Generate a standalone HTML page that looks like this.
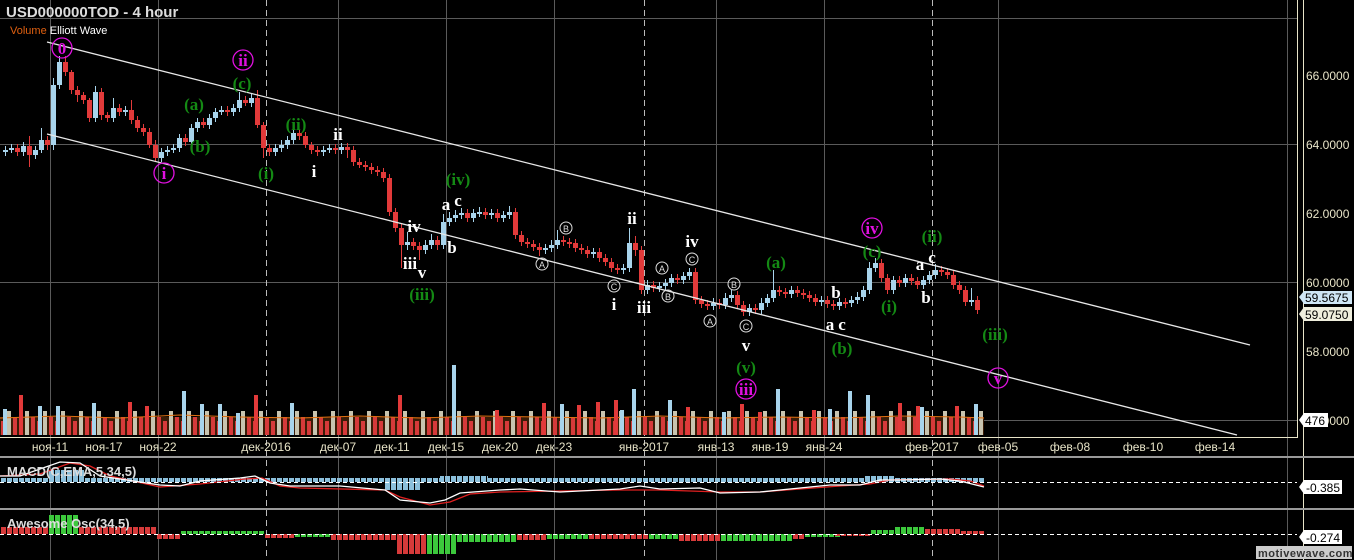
<!DOCTYPE html>
<html><head><meta charset="utf-8"><style>
body{margin:0;background:#000;width:1354px;height:560px;overflow:hidden}
svg{display:block}
.t{font-family:"Liberation Sans",sans-serif}
.w{font-family:"Liberation Serif",serif;font-weight:bold;font-size:17px;text-anchor:middle}
.g{fill:#148a14}.m{fill:#e010e0}.wh{fill:#fff}
.ax{font-family:"Liberation Sans",sans-serif;font-size:12px;fill:#e8e4c8}
</style></head><body>
<svg width="1354" height="560" xmlns="http://www.w3.org/2000/svg">
<defs>
<pattern id="pv" x="0" y="395" width="18" height="40" patternUnits="userSpaceOnUse"><rect x="1" y="26" width="4" height="14" fill="#d63a3a"/><rect x="7" y="16" width="4" height="24" fill="#c8c4b0"/><rect x="13" y="22" width="4" height="18" fill="#d63a3a"/></pattern>
<pattern id="pr" width="6" height="10" patternUnits="userSpaceOnUse"><rect x="1" width="5" height="10" fill="#d63a3a"/></pattern>
<pattern id="pg" width="6" height="10" patternUnits="userSpaceOnUse"><rect x="1" width="5" height="10" fill="#3cc83c"/></pattern>
<pattern id="pb" width="6" height="10" patternUnits="userSpaceOnUse"><rect x="1" width="5" height="10" fill="#8cc0dc"/></pattern>
</defs>
<g stroke="#5a5a5a" stroke-width="1">
<line x1="0" y1="18.5" x2="1297" y2="18.5"/><line x1="0" y1="144.5" x2="1297" y2="144.5"/><line x1="0" y1="282.5" x2="1297" y2="282.5"/><line x1="0" y1="420.5" x2="1297" y2="420.5"/>
<line x1="50.5" y1="0" x2="50.5" y2="560"/><line x1="158.5" y1="0" x2="158.5" y2="560"/><line x1="338.5" y1="0" x2="338.5" y2="560"/><line x1="446.5" y1="0" x2="446.5" y2="560"/><line x1="554.5" y1="0" x2="554.5" y2="560"/><line x1="716.5" y1="0" x2="716.5" y2="560"/><line x1="824.5" y1="0" x2="824.5" y2="560"/><line x1="998.5" y1="0" x2="998.5" y2="560"/><line x1="1287.5" y1="0" x2="1287.5" y2="560"/>
</g>
<g stroke="#bbb" stroke-dasharray="6,4"><line x1="266.5" y1="0" x2="266.5" y2="560"/><line x1="644.5" y1="0" x2="644.5" y2="560"/><line x1="932.5" y1="0" x2="932.5" y2="560"/></g>
<!-- volume -->
<rect x="0" y="417" width="984" height="18" fill="#3a1c06"/>
<rect x="0" y="395" width="984" height="40" fill="url(#pv)"/>
<path d="M0 418L60 416L120 418L180 415L240 417L300 418L360 416L420 418L480 416L540 417L600 418L660 416L720 418L780 417L840 418L900 416L960 417L984 418" fill="none" stroke="#e07010"/>
<path fill="#a8d4ec" d="M3 409h4v26h-4zM38 406h4v29h-4zM56 406h4v29h-4zM92 403h4v32h-4zM182 391h4v44h-4zM200 404h4v31h-4zM218 404h4v31h-4zM236 413h4v22h-4zM290 403h4v32h-4zM452 365h4v70h-4zM560 404h4v31h-4zM620 410h4v25h-4zM632 389h4v46h-4zM668 400h4v35h-4zM722 412h4v23h-4zM776 389h4v46h-4zM828 409h4v26h-4zM848 391h4v44h-4zM866 395h4v40h-4zM920 407h4v28h-4zM974 404h4v31h-4z"/>
<path fill="#e23a3a" d="M19 395h4v40h-4zM128 402h4v33h-4zM145 406h4v29h-4zM254 395h4v40h-4zM398 395h4v40h-4zM495 410h4v25h-4zM542 403h4v32h-4zM577 405h4v30h-4zM596 402h4v33h-4zM614 400h4v35h-4zM686 407h4v28h-4zM740 404h4v31h-4zM758 412h4v23h-4zM812 410h4v25h-4zM898 403h4v32h-4zM916 406h4v29h-4zM955 406h4v29h-4z"/>
<!-- candles -->
<path stroke="#a8d4ec" fill="none" d="M5.5 146V156M11.5 144V153M23.5 142V156M35.5 146V159M41.5 128V153M53.5 78V150M59.5 56V89M95.5 86V122M113.5 98V122M125.5 106V116M161.5 148V162M167.5 146V156M173.5 144V153M179.5 134V152M191.5 124V146M197.5 118V132M209.5 114V129M215.5 108V122M221.5 106V115M233.5 104V116M239.5 92V112M251.5 94V107M275.5 144V156M281.5 140V152M287.5 136V149M293.5 128V144M323.5 146V156M329.5 144V153M341.5 143V154M407.5 232V250M425.5 240V254M431.5 234V249M443.5 214V249M449.5 212V226M455.5 210V222M461.5 208V219M473.5 209V222M479.5 207V217M491.5 209V219M503.5 211V222M509.5 206V219M545.5 244V254M551.5 240V252M557.5 230V249M593.5 248V258M623.5 264V274M629.5 228V272M647.5 280V294M659.5 282V292M665.5 279V290M671.5 274V287M683.5 272V284M689.5 268V280M713.5 298V310M725.5 293V309M731.5 290V302M749.5 304V316M761.5 298V314M767.5 294V307M773.5 270V302M791.5 286V298M821.5 296V306M839.5 298V310M851.5 296V307M857.5 292V304M863.5 286V301M869.5 262V294M875.5 258V272M893.5 276V294M905.5 274V287M923.5 276V289M929.5 271V284M935.5 264V279M971.5 288V306"/>
<path fill="#a8d4ec" d="M3 150h5v2h-5zM9 148h5v2h-5zM21 146h5v6h-5zM33 150h5v5h-5zM39 140h5v10h-5zM51 85h5v60h-5zM57 62h5v23h-5zM93 92h5v26h-5zM111 108h5v10h-5zM123 110h5v2h-5zM159 152h5v6h-5zM165 150h5v2h-5zM171 148h5v2h-5zM177 138h5v10h-5zM189 128h5v14h-5zM195 122h5v6h-5zM207 118h5v7h-5zM213 112h5v6h-5zM219 110h5v2h-5zM231 108h5v4h-5zM237 100h5v8h-5zM249 98h5v5h-5zM273 148h5v4h-5zM279 145h5v3h-5zM285 140h5v5h-5zM291 133h5v7h-5zM321 150h5v2h-5zM327 148h5v2h-5zM339 147h5v3h-5zM405 242h5v3h-5zM423 245h5v5h-5zM429 240h5v5h-5zM441 222h5v23h-5zM447 218h5v4h-5zM453 215h5v3h-5zM459 213h5v2h-5zM471 213h5v5h-5zM477 212h5v2h-5zM489 213h5v2h-5zM501 215h5v3h-5zM507 212h5v3h-5zM543 248h5v2h-5zM549 245h5v3h-5zM555 240h5v5h-5zM591 252h5v2h-5zM621 268h5v2h-5zM627 243h5v25h-5zM645 285h5v5h-5zM657 286h5v2h-5zM663 283h5v3h-5zM669 278h5v5h-5zM681 276h5v4h-5zM687 272h5v4h-5zM711 303h5v3h-5zM723 298h5v7h-5zM729 295h5v3h-5zM747 308h5v4h-5zM759 303h5v7h-5zM765 298h5v5h-5zM771 290h5v8h-5zM789 290h5v4h-5zM819 300h5v2h-5zM837 302h5v4h-5zM849 300h5v3h-5zM855 297h5v3h-5zM861 290h5v7h-5zM867 268h5v22h-5zM873 263h5v5h-5zM891 280h5v10h-5zM903 278h5v5h-5zM921 280h5v5h-5zM927 275h5v5h-5zM933 270h5v5h-5zM969 300h5v2h-5z"/>
<path stroke="#e23a3a" fill="none" d="M17.5 144V156M29.5 136V167M47.5 136V150M65.5 56V76M71.5 70V94M77.5 86V102M83.5 92V104M89.5 98V122M101.5 88V120M107.5 112V122M119.5 104V116M131.5 100V124M137.5 116V132M143.5 124V136M149.5 128V148M155.5 140V162M185.5 134V146M203.5 118V128M227.5 106V116M245.5 96V106M257.5 90V128M263.5 122V158M269.5 144V156M299.5 130V140M305.5 132V148M311.5 142V154M317.5 146V156M335.5 144V154M347.5 143V158M353.5 146V166M359.5 158V168M365.5 161V171M371.5 163V174M377.5 166V176M383.5 168V182M389.5 174V216M395.5 208V232M401.5 224V268M413.5 238V250M419.5 242V260M437.5 236V250M467.5 209V222M485.5 208V219M497.5 209V222M515.5 208V239M521.5 231V246M527.5 238V248M533.5 240V251M539.5 243V256M563.5 236V246M569.5 238V248M575.5 239V252M581.5 244V254M587.5 246V258M599.5 248V262M605.5 254V266M611.5 258V272M617.5 264V274M635.5 236V256M641.5 246V294M653.5 281V292M677.5 274V284M695.5 268V304M701.5 296V308M707.5 300V310M719.5 299V309M737.5 291V309M743.5 301V316M755.5 304V314M779.5 286V296M785.5 288V298M797.5 286V297M803.5 289V299M809.5 291V302M815.5 294V306M827.5 296V308M833.5 300V310M845.5 298V308M881.5 259V282M887.5 274V294M899.5 276V287M911.5 274V285M917.5 277V289M941.5 266V276M947.5 268V279M953.5 271V289M959.5 281V294M965.5 286V306M977.5 296V314"/>
<path fill="#e23a3a" d="M15 148h5v4h-5zM27 146h5v9h-5zM45 140h5v5h-5zM63 62h5v10h-5zM69 72h5v18h-5zM75 90h5v5h-5zM81 95h5v5h-5zM87 100h5v18h-5zM99 92h5v23h-5zM105 115h5v3h-5zM117 108h5v4h-5zM129 110h5v10h-5zM135 120h5v8h-5zM141 128h5v4h-5zM147 132h5v13h-5zM153 145h5v13h-5zM183 138h5v4h-5zM201 122h5v3h-5zM225 110h5v2h-5zM243 100h5v3h-5zM255 98h5v27h-5zM261 125h5v23h-5zM267 148h5v4h-5zM297 133h5v3h-5zM303 136h5v9h-5zM309 145h5v5h-5zM315 150h5v2h-5zM333 148h5v2h-5zM345 147h5v3h-5zM351 150h5v12h-5zM357 162h5v3h-5zM363 165h5v2h-5zM369 167h5v3h-5zM375 170h5v2h-5zM381 172h5v6h-5zM387 178h5v34h-5zM393 212h5v16h-5zM399 228h5v17h-5zM411 242h5v4h-5zM417 246h5v4h-5zM435 240h5v5h-5zM465 213h5v5h-5zM483 212h5v3h-5zM495 213h5v5h-5zM513 212h5v23h-5zM519 235h5v7h-5zM525 242h5v2h-5zM531 244h5v3h-5zM537 247h5v3h-5zM561 240h5v2h-5zM567 242h5v2h-5zM573 243h5v5h-5zM579 248h5v2h-5zM585 250h5v4h-5zM597 252h5v6h-5zM603 258h5v4h-5zM609 262h5v6h-5zM615 268h5v2h-5zM633 243h5v7h-5zM639 250h5v40h-5zM651 285h5v3h-5zM675 278h5v2h-5zM693 272h5v28h-5zM699 300h5v4h-5zM705 304h5v2h-5zM717 303h5v2h-5zM735 295h5v10h-5zM741 305h5v7h-5zM753 308h5v2h-5zM777 290h5v2h-5zM783 292h5v2h-5zM795 290h5v3h-5zM801 293h5v2h-5zM807 295h5v3h-5zM813 298h5v4h-5zM825 300h5v4h-5zM831 304h5v2h-5zM843 302h5v2h-5zM879 263h5v15h-5zM885 278h5v12h-5zM897 280h5v3h-5zM909 278h5v3h-5zM915 281h5v4h-5zM939 270h5v2h-5zM945 272h5v3h-5zM951 275h5v10h-5zM957 285h5v5h-5zM963 290h5v12h-5zM975 300h5v10h-5z"/>
<g stroke="#e8e8e8" stroke-width="1.3"><line x1="47" y1="42" x2="1250" y2="345"/><line x1="47" y1="134" x2="1237" y2="435"/></g>
<!-- MACD -->
<rect x="0" y="478" width="984" height="4" fill="url(#pb)"/>
<rect x="48" y="470" width="36" height="12" fill="url(#pb)"/><rect x="384" y="482" width="36" height="8" fill="url(#pb)"/><rect x="440" y="476" width="48" height="6" fill="url(#pb)"/><rect x="864" y="476" width="30" height="6" fill="url(#pb)"/>
<polyline fill="none" stroke="#e02020" stroke-width="1.3" points="0,476 40,474 70,463 90,466 110,476 160,487 200,484 245,479 262,478 280,486 300,488 385,490 400,497 430,505 450,502 470,494 500,492 560,491 620,490 660,490 720,492 760,492 800,489 840,486 870,484 890,480 950,479 970,481 984,486"/>
<polyline fill="none" stroke="#fff" stroke-width="1.3" points="0,476 20,476 60,462 80,463 100,476 160,485 180,486 200,481 240,478 255,476 270,483 290,486 340,486 385,490 400,500 430,503 445,500 460,493 500,490 520,489 560,492 620,489 640,486 660,489 700,488 720,493 760,492 800,488 830,485 860,485 880,480 900,480 940,479 960,481 984,487"/>
<!-- AO -->
<g>
<rect x="0" y="527" width="48" height="7" fill="url(#pr)"/><rect x="48" y="515" width="30" height="19" fill="url(#pg)"/><rect x="78" y="527" width="78" height="7" fill="url(#pr)"/>
<rect x="156" y="534" width="24" height="5" fill="url(#pr)"/><rect x="180" y="531" width="84" height="3" fill="url(#pg)"/><rect x="264" y="534" width="30" height="4" fill="url(#pr)"/>
<rect x="294" y="534" width="36" height="3" fill="url(#pg)"/><rect x="330" y="534" width="66" height="6" fill="url(#pr)"/><rect x="396" y="534" width="30" height="20" fill="url(#pr)"/>
<rect x="426" y="534" width="30" height="20" fill="url(#pg)"/><rect x="456" y="534" width="60" height="8" fill="url(#pg)"/><rect x="516" y="534" width="30" height="6" fill="url(#pr)"/>
<rect x="546" y="534" width="42" height="5" fill="url(#pg)"/><rect x="588" y="534" width="60" height="5" fill="url(#pr)"/><rect x="648" y="534" width="30" height="5" fill="url(#pg)"/>
<rect x="678" y="534" width="42" height="7" fill="url(#pr)"/><rect x="720" y="534" width="72" height="7" fill="url(#pg)"/><rect x="792" y="534" width="12" height="5" fill="url(#pr)"/>
<rect x="804" y="534" width="36" height="3" fill="url(#pg)"/><rect x="834" y="534" width="36" height="2" fill="url(#pr)"/>
<rect x="870" y="530" width="24" height="4" fill="url(#pg)"/><rect x="894" y="527" width="30" height="7" fill="url(#pg)"/><rect x="924" y="529" width="36" height="5" fill="url(#pr)"/><rect x="960" y="531" width="24" height="3" fill="url(#pr)"/>
</g>
<g stroke="#e8e4c8"><line x1="0" y1="437.5" x2="1297" y2="437.5"/><line x1="1297.5" y1="0" x2="1297.5" y2="438"/><line x1="1303.5" y1="0" x2="1303.5" y2="560"/></g>
<rect x="0" y="456" width="1354" height="2" fill="#999"/><rect x="0" y="508" width="1354" height="2" fill="#999"/>
<g stroke="#fff" stroke-dasharray="4,3"><line x1="0" y1="482.5" x2="1297" y2="482.5"/><line x1="0" y1="534.5" x2="1297" y2="534.5"/></g>
<text x="6" y="17" class="t" font-size="15" font-weight="bold" fill="#ddd">USD000000TOD - 4 hour</text>
<text x="10" y="34" class="t" font-size="11"><tspan fill="#e06010">Volume</tspan><tspan fill="#fff"> Elliott Wave</tspan></text>
<g class="ax"><text x="1306" y="80">66.0000</text><text x="1306" y="149">64.0000</text><text x="1306" y="218">62.0000</text><text x="1306" y="287">60.0000</text><text x="1306" y="356">58.0000</text><text x="1306" y="425">56.0000</text></g>
<g font-family="Liberation Sans" font-size="12">
<path d="M1299 297 l5 -6 h48 v13 h-48z" fill="#cfe6f5"/><text x="1305" y="302" fill="#000">59.5675</text>
<path d="M1299 314 l5 -7 h48 v14 h-48z" fill="#efeedd"/><text x="1305" y="319" fill="#000">59.0750</text>
<path d="M1299 420 l5 -7 h24 v14 h-24z" fill="#fff"/><text x="1305" y="425" fill="#000">476</text>
<path d="M1299 487 l5 -7 h38 v14 h-38z" fill="#fff"/><text x="1306" y="492" fill="#000">-0.385</text>
<path d="M1299 537 l5 -7 h38 v14 h-38z" fill="#fff"/><text x="1306" y="542" fill="#000">-0.274</text>
</g>
<g class="ax" text-anchor="middle" font-size="12"><text x="50" y="451">ноя-11</text><text x="104" y="451">ноя-17</text><text x="158" y="451">ноя-22</text><text x="266" y="451">дек-2016</text><text x="338" y="451">дек-07</text><text x="392" y="451">дек-11</text><text x="446" y="451">дек-15</text><text x="500" y="451">дек-20</text><text x="554" y="451">дек-23</text><text x="644" y="451">янв-2017</text><text x="716" y="451">янв-13</text><text x="770" y="451">янв-19</text><text x="824" y="451">янв-24</text><text x="932" y="451">фев-2017</text><text x="998" y="451">фев-05</text><text x="1070" y="451">фев-08</text><text x="1143" y="451">фев-10</text><text x="1215" y="451">фев-14</text></g>
<text x="7" y="476" class="t" font-size="13" font-weight="bold" fill="#ddd">MACD(C,EMA,5,34,5)</text>
<text x="7" y="528" class="t" font-size="13" font-weight="bold" fill="#ddd">Awesome Osc(34,5)</text>
<rect x="1256" y="546" width="96" height="13" fill="#ccc"/><text x="1258" y="557" class="t" font-size="11" font-weight="bold" fill="#333" letter-spacing="0.5">motivewave.com</text>
<g fill="none" stroke="#e010e0" stroke-width="1.3"><circle cx="62" cy="48" r="10"/><circle cx="243" cy="60" r="10"/><circle cx="164" cy="173" r="10"/><circle cx="872" cy="228" r="10"/><circle cx="746" cy="389" r="10"/><circle cx="998" cy="378" r="10"/></g>
<g fill="none" stroke="#ddd"><circle cx="542" cy="264" r="6"/><circle cx="566" cy="228" r="6"/><circle cx="614" cy="286" r="6"/><circle cx="662" cy="268" r="6"/><circle cx="668" cy="296" r="6"/><circle cx="692" cy="259" r="6"/><circle cx="710" cy="321" r="6"/><circle cx="734" cy="284" r="6"/><circle cx="746" cy="326" r="6"/></g>
<g font-family="Liberation Sans" font-size="9" fill="#ddd" text-anchor="middle"><text x="542" y="268">A</text><text x="566" y="232">B</text><text x="614" y="290">C</text><text x="662" y="272">A</text><text x="668" y="300">B</text><text x="692" y="263">C</text><text x="710" y="325">A</text><text x="734" y="288">B</text><text x="746" y="330">C</text></g>
<g class="w">
<text x="62" y="54" class="m">0</text><text x="243" y="66" class="m">ii</text><text x="164" y="179" class="m">i</text><text x="872" y="234" class="m">iv</text><text x="746" y="395" class="m">iii</text><text x="998" y="384" class="m">v</text>
<text x="242" y="89" class="g">(c)</text><text x="194" y="110" class="g">(a)</text><text x="200" y="152" class="g">(b)</text><text x="266" y="179" class="g">(i)</text><text x="296" y="130" class="g">(ii)</text><text x="458" y="185" class="g">(iv)</text><text x="422" y="300" class="g">(iii)</text><text x="776" y="268" class="g">(a)</text><text x="842" y="354" class="g">(b)</text><text x="872" y="257" class="g">(c)</text><text x="889" y="312" class="g">(i)</text><text x="932" y="242" class="g">(ii)</text><text x="995" y="340" class="g">(iii)</text><text x="746" y="373" class="g">(v)</text>
<text x="338" y="140" class="wh">ii</text><text x="314" y="177" class="wh">i</text><text x="414" y="232" class="wh">iv</text><text x="410" y="269" class="wh">iii</text><text x="422" y="278" class="wh">v</text><text x="446" y="210" class="wh">a</text><text x="458" y="206" class="wh">c</text><text x="452" y="253" class="wh">b</text><text x="632" y="224" class="wh">ii</text><text x="614" y="310" class="wh">i</text><text x="644" y="313" class="wh">iii</text><text x="692" y="247" class="wh">iv</text><text x="746" y="351" class="wh">v</text><text x="836" y="298" class="wh">b</text><text x="830" y="330" class="wh">a</text><text x="842" y="330" class="wh">c</text><text x="920" y="270" class="wh">a</text><text x="932" y="263" class="wh">c</text><text x="926" y="303" class="wh">b</text>
</g>
</svg>
</body></html>
